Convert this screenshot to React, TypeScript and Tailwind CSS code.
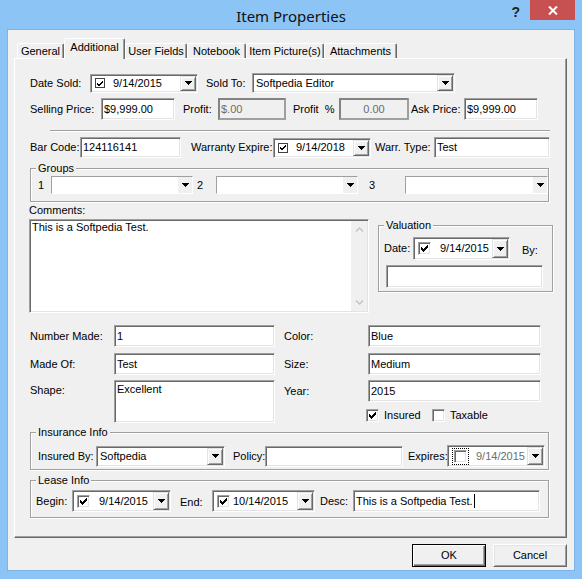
import React from "react";

const SUNKEN =
  "border border-t-[#a0a0a0] border-l-[#a0a0a0] border-r-white border-b-white shadow-[inset_1px_1px_0_#696969,inset_-1px_-1px_0_#e3e3e3]";
const RAISED =
  "bg-[#f0f0f0] border border-t-[#e3e3e3] border-l-[#e3e3e3] border-r-[#696969] border-b-[#696969] shadow-[inset_1px_1px_0_#ffffff,inset_-1px_-1px_0_#a0a0a0]";

function Arrow() {
  return (
    <svg width="7" height="4" viewBox="0 0 7 4" shapeRendering="crispEdges">
      <path d="M0 0h7v1H0zM1 1h5v1H1zM2 2h3v1H2zM3 3h1v1H3z" fill="#000" />
    </svg>
  );
}

function DropBtn() {
  return (
    <div className={`${RAISED} w-[16px] shrink-0 flex items-center justify-center`}>
      <Arrow />
    </div>
  );
}

function BigMark() {
  return (
    <svg width="7" height="7" viewBox="0 0 7 7" shapeRendering="crispEdges">
      <path
        d="M6 0h1v1H6zM5 1h2v1H5zM0 2h1v1H0zM4 2h3v1H4zM0 3h2v1H0zM3 3h3v1H3zM0 4h5v1H0zM1 5h3v1H1zM2 6h1v1H2z"
        fill="#000"
      />
    </svg>
  );
}

function SmallMark() {
  return (
    <svg width="6" height="5" viewBox="0 0 6 5" shapeRendering="crispEdges">
      <path d="M5 0h1v1H5zM4 1h2v1H4zM0 2h1v1H0zM3 2h2v1H3zM0 3h2v1H0zM2 3h2v1H2zM1 4h2v1H1z" fill="#000" />
    </svg>
  );
}

function SmallCheck() {
  return (
    <div className="w-[10px] h-[10px] border border-[#404040] bg-white flex items-center justify-center">
      <SmallMark />
    </div>
  );
}

function BigCheck({ checked }: { checked: boolean }) {
  return (
    <div className={`${SUNKEN} w-[13px] h-[13px] bg-white flex items-center justify-center shrink-0`}>
      {checked && <BigMark />}
    </div>
  );
}

function FocusCheck() {
  return (
    <div className="border border-dotted border-black p-[1px]">
      <div className={`${SUNKEN} w-[13px] h-[13px] bg-white`} />
    </div>
  );
}

function Label({ cls, children }: { cls: string; children: React.ReactNode }) {
  return <span className={`shrink-0 whitespace-nowrap ${cls}`}>{children}</span>;
}

function Input({ cls, children }: { cls: string; children?: React.ReactNode }) {
  return (
    <div className={`${SUNKEN} bg-white p-[1px] pl-[2px] flex items-center shrink-0 whitespace-nowrap overflow-hidden ${cls}`}>
      {children}
    </div>
  );
}

function Disabled({ cls, children }: { cls: string; children?: React.ReactNode }) {
  return (
    <div
      className={`border-2 border-t-[#838383] border-l-[#838383] border-r-[#a0a0a0] border-b-[#a0a0a0] bg-[#f0f0f0] text-[#6d6d6d] flex items-center shrink-0 whitespace-nowrap ${cls}`}
    >
      {children}
    </div>
  );
}

function Combo({ cls, text }: { cls: string; text?: string }) {
  return (
    <div className={`${SUNKEN} bg-white p-[1px] flex items-stretch shrink-0 ${cls}`}>
      <span className="flex-1 flex items-center pl-[2px] whitespace-nowrap overflow-hidden">{text}</span>
      <DropBtn />
    </div>
  );
}

function FlatCombo({ cls }: { cls: string }) {
  return (
    <div
      className={`border border-t-[#a0a0a0] border-l-[#a0a0a0] border-r-white border-b-white bg-white flex items-stretch shrink-0 ${cls}`}
    >
      <span className="flex-1" />
      <div className="w-[14px] bg-[#f0f0f0] flex items-center justify-center">
        <Arrow />
      </div>
    </div>
  );
}

function DatePicker({
  cls,
  check,
  text,
  textCls,
}: {
  cls: string;
  check: React.ReactNode;
  text: string;
  textCls: string;
}) {
  return (
    <div className={`${SUNKEN} bg-white p-[1px] flex items-stretch shrink-0 ${cls}`}>
      <div className="flex items-center pl-[3px]">{check}</div>
      <span className={`flex items-center whitespace-nowrap ${textCls}`}>{text}</span>
      <span className="flex-1" />
      <DropBtn />
    </div>
  );
}

function Group({
  label,
  cls,
  children,
}: {
  label: string;
  cls: string;
  children?: React.ReactNode;
}) {
  return (
    <div className={`relative shrink-0 border border-[#a0a0a0] shadow-[inset_1px_1px_0_#ffffff,1px_1px_0_#ffffff] ${cls}`}>
      <span className="absolute -top-[7px] left-[5px] bg-[#f0f0f0] px-[2px] whitespace-nowrap">{label}</span>
      {children}
    </div>
  );
}

function Chevron({ up }: { up: boolean }) {
  return (
    <svg width="9" height="5" viewBox="0 0 9 5">
      <polyline
        points={up ? "1,4.5 4.5,1 8,4.5" : "1,0.5 4.5,4 8,0.5"}
        fill="none"
        stroke="#c2c2c2"
        strokeWidth="1.4"
      />
    </svg>
  );
}

function Tab({ label, cls, selected }: { label: string; cls: string; selected?: boolean }) {
  if (selected) {
    return (
      <div
        className={`relative z-10 -mb-[1px] h-[21px] bg-[#f0f0f0] flex items-start justify-center pt-[2px] border-t border-l border-r border-t-white border-l-white border-r-[#696969] rounded-t-[2px] shadow-[inset_-1px_0_0_#a0a0a0] ${cls}`}
      >
        {label}
      </div>
    );
  }
  return (
    <div
      className={`h-[15px] flex items-center justify-center border-t border-l border-r border-t-white border-l-white border-r-[#696969] rounded-t-[2px] shadow-[inset_-1px_0_0_#a0a0a0] ${cls}`}
    >
      {label}
    </div>
  );
}

export default function App() {
  return (
    <div className="w-[582px] h-[579px] bg-[#8cc4f6] overflow-hidden font-['Liberation_Sans',Arial,sans-serif] text-[11px] leading-[13px] text-black select-none">
      {/* Title bar */}
      <div className="h-[30px] grid grid-cols-[1fr_auto_1fr]">
        <div />
        <div className="flex items-center justify-center pt-[1px] text-[15px] leading-[18px] text-[#111] font-['Noto_Sans','Open_Sans',sans-serif]">
          Item Properties
        </div>
        <div className="flex items-start justify-end">
          <span className="mt-[5px] mr-[10px] font-bold text-[14px] leading-[14px] text-[#222]">?</span>
          <div className="w-[45px] h-[20px] bg-[#c75050] flex items-center justify-center mr-[7px]">
            <svg width="10" height="9" viewBox="0 0 10 9">
              <path d="M1 0.5 L9 8.5 M9 0.5 L1 8.5" stroke="#fff" strokeWidth="2" />
            </svg>
          </div>
        </div>
      </div>

      {/* Client */}
      <div className="mx-[8px] h-[540px] bg-[#f0f0f0] shadow-[0_0_0_1px_#7db3e6] flex flex-col pl-[6px] pt-[8px]">
        {/* Tabs */}
        <div className="flex items-end h-[20px] pl-[3px]">
          <Tab label="General" cls="w-[47px]" />
          <Tab label="Additional" cls="w-[61px]" selected />
          <Tab label="User Fields" cls="w-[62px]" />
          <Tab label="Notebook" cls="w-[59px]" />
          <Tab label="Item Picture(s)" cls="w-[78px]" />
          <Tab label="Attachments" cls="w-[73px]" />
        </div>

        {/* Panel */}
        <div className="relative w-[553px] h-[480px] border border-t-white border-l-white border-r-[#696969] border-b-[#696969] shadow-[inset_-1px_-1px_0_#a0a0a0] flex flex-col">
          {/* Row 1 */}
          <div className="flex items-center h-[20px] mt-[14px] ml-[15px]">
            <Label cls="w-[60px]">Date Sold:</Label>
            <DatePicker cls="w-[108px] h-[19px]" check={<SmallCheck />} text="9/14/2015" textCls="ml-[8px]" />
            <Label cls="ml-[8px] w-[46px]">Sold To:</Label>
            <Combo cls="w-[203px] h-[20px]" text="Softpedia Editor" />
          </div>

          {/* Row 2 */}
          <div className="flex items-center h-[22px] mt-[5px] ml-[15px]">
            <Label cls="w-[71px]">Selling Price:</Label>
            <Input cls="w-[74px] h-[22px]">$9,999.00</Input>
            <Label cls="ml-[8px] w-[35px]">Profit:</Label>
            <Disabled cls="w-[68px] h-[22px] pl-[1px]">$.00</Disabled>
            <Label cls="ml-[7px] w-[46px]">Profit&nbsp;&nbsp;%</Label>
            <Disabled cls="w-[70px] h-[22px] justify-center">0.00</Disabled>
            <Label cls="ml-[2px] w-[53px]">Ask Price:</Label>
            <Input cls="w-[74px] h-[22px]">$9,999.00</Input>
          </div>

          {/* Separator */}
          <div className="mt-[10px] ml-[35px] w-[500px] h-[2px] border-t border-t-[#a0a0a0] border-b border-b-white" />

          {/* Row 3 */}
          <div className="flex items-center h-[21px] mt-[5px] ml-[15px]">
            <Label cls="w-[50px]">Bar Code:</Label>
            <Input cls="w-[101px] h-[21px]">124116141</Input>
            <Label cls="ml-[10px] w-[82px]">Warranty Expire:</Label>
            <DatePicker cls="w-[98px] h-[20px]" check={<SmallCheck />} text="9/14/2018" textCls="ml-[8px]" />
            <Label cls="ml-[4px] w-[59px]">Warr. Type:</Label>
            <Input cls="w-[116px] h-[21px]">Test</Input>
          </div>

          {/* Groups */}
          <Group label="Groups" cls="mt-[10px] ml-[15px] w-[519px] h-[34px]">
            <div className="flex items-center h-full pl-[7px]">
              <Label cls="w-[13px]">1</Label>
              <FlatCombo cls="w-[142px] h-[18px]" />
              <Label cls="ml-[4px] w-[19px]">2</Label>
              <FlatCombo cls="w-[142px] h-[18px]" />
              <Label cls="ml-[11px] w-[36px]">3</Label>
              <FlatCombo cls="w-[143px] h-[18px]" />
            </div>
          </Group>

          {/* Comments + Valuation */}
          <div className="flex items-start">
            <div className="ml-[14px] w-[340px] flex flex-col">
              <span className="mt-[2px]">Comments:</span>
              <div className={`${SUNKEN} mt-[2px] h-[94px] bg-white p-[1px] flex`}>
                <div className="flex-1 pl-[1px]">This is a Softpedia Test.</div>
                <div className="w-[16px] bg-[#f0f0f0] flex flex-col justify-between items-center pt-[6px] pb-[6px]">
                  <Chevron up />
                  <Chevron up={false} />
                </div>
              </div>
            </div>
            <Group label="Valuation" cls="ml-[9px] mt-[23px] w-[175px] h-[67px]">
              <div className="flex items-center mt-[11px] pl-[5px] h-[23px]">
                <Label cls="w-[29px]">Date:</Label>
                <DatePicker cls="w-[97px] h-[23px]" check={<BigCheck checked />} text="9/14/2015" textCls="ml-[9px]" />
                <Label cls="ml-[12px] mt-[4px]">By:</Label>
              </div>
              <Input cls="ml-[7px] mt-[5px] w-[157px] h-[23px]" />
            </Group>
          </div>

          {/* Fields */}
          <div className="flex items-start ml-[15px] mt-[12px]">
            <div className="flex flex-col w-[245px]">
              <div className="flex items-center h-[22px]">
                <Label cls="w-[84px]">Number Made:</Label>
                <Input cls="w-[161px] h-[22px]">1</Input>
              </div>
              <div className="flex items-center h-[22px] mt-[6px]">
                <Label cls="w-[84px]">Made Of:</Label>
                <Input cls="w-[161px] h-[22px]">Test</Input>
              </div>
              <div className="flex items-start mt-[5px]">
                <Label cls="w-[84px] pt-[4px]">Shape:</Label>
                <div className={`${SUNKEN} w-[161px] h-[43px] bg-white p-[1px] pl-[2px] pt-[2px]`}>Excellent</div>
              </div>
            </div>
            <div className="flex flex-col ml-[9px]">
              <div className="flex items-center h-[22px]">
                <Label cls="w-[84px]">Color:</Label>
                <Input cls="w-[173px] h-[22px]">Blue</Input>
              </div>
              <div className="flex items-center h-[22px] mt-[6px]">
                <Label cls="w-[84px]">Size:</Label>
                <Input cls="w-[173px] h-[22px]">Medium</Input>
              </div>
              <div className="flex items-center h-[22px] mt-[5px]">
                <Label cls="w-[84px]">Year:</Label>
                <Input cls="w-[173px] h-[22px]">2015</Input>
              </div>
              <div className="flex items-center mt-[7px] ml-[82px] h-[13px]">
                <div className="flex items-center w-[66px]">
                  <BigCheck checked />
                  <span className="ml-[5px]">Insured</span>
                </div>
                <div className="flex items-center">
                  <BigCheck checked={false} />
                  <span className="ml-[5px]">Taxable</span>
                </div>
              </div>
            </div>
          </div>

          {/* Insurance Info */}
          <Group label="Insurance Info" cls="mt-[9px] ml-[15px] w-[519px] h-[38px]">
            <div className="flex items-center mt-[12px] pl-[7px] h-[22px]">
              <Label cls="w-[58px]">Insured By:</Label>
              <Combo cls="w-[129px] h-[21px]" text="Softpedia" />
              <Label cls="ml-[8px] w-[32px]">Policy:</Label>
              <Input cls="w-[138px] h-[21px]" />
              <Label cls="ml-[5px] w-[39px]">Expires:</Label>
              <DatePicker
                cls="w-[98px] h-[22px]"
                check={<FocusCheck />}
                text="9/14/2015"
                textCls="ml-[7px] text-[#6d6d6d]"
              />
            </div>
          </Group>

          {/* Lease Info */}
          <Group label="Lease Info" cls="mt-[10px] ml-[15px] w-[519px] h-[38px]">
            <div className="flex items-center mt-[9px] pl-[5px] h-[22px]">
              <Label cls="w-[36px]">Begin:</Label>
              <DatePicker cls="w-[99px] h-[22px]" check={<BigCheck checked />} text="9/14/2015" textCls="ml-[9px]" />
              <Label cls="ml-[9px] w-[32px] mt-[2px]">End:</Label>
              <DatePicker cls="w-[103px] h-[22px]" check={<BigCheck checked />} text="10/14/2015" textCls="ml-[3px]" />
              <Label cls="ml-[5px] w-[33px]">Desc:</Label>
              <Input cls="w-[187px] h-[22px]">
                This is a Softpedia Test.
                <span className="inline-block w-[1px] h-[14px] bg-black ml-[1px]" />
              </Input>
            </div>
          </Group>
        </div>

        {/* Buttons */}
        <div className="flex justify-end gap-[7px] mt-[6px] w-[553px]">
          <button className="w-[74px] h-[23px] bg-[#f0f0f0] border border-black shadow-[inset_1px_1px_0_#ffffff,inset_-1px_-1px_0_#696969,inset_-2px_-2px_0_#a0a0a0] flex items-center justify-center">
            OK
          </button>
          <button className="w-[74px] h-[23px] bg-[#f0f0f0] border border-t-white border-l-white border-r-[#696969] border-b-[#696969] shadow-[inset_1px_1px_0_#e3e3e3,inset_-1px_-1px_0_#a0a0a0] flex items-center justify-center">
            Cancel
          </button>
        </div>
      </div>
    </div>
  );
}
